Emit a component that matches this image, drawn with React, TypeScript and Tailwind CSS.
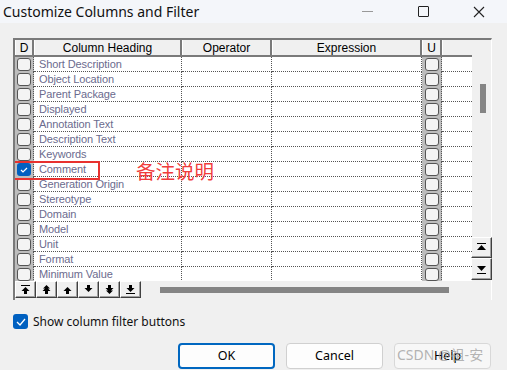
import React from 'react'

const rows = [
  'Short Description',
  'Object Location',
  'Parent Package',
  'Displayed',
  'Annotation Text',
  'Description Text',
  'Keywords',
  'Comment',
  'Generation Origin',
  'Stereotype',
  'Domain',
  'Model',
  'Unit',
  'Format',
  'Minimum Value',
]

function Box({ checked }: { checked?: boolean }) {
  if (checked) {
    return (
      <div className="w-[14px] h-[13px] rounded-[3px] bg-[#0060c0] flex items-center justify-center">
        <svg width="8" height="6" viewBox="0 0 8 6" fill="none">
          <path d="M1 3l2 2 4-4" stroke="#fff" strokeWidth="1.2" />
        </svg>
      </div>
    )
  }
  return <div className="w-[14px] h-[13px] rounded-[3px] border border-[#555] bg-[#f4f4f4]" />
}

// small arrow icons for the row move buttons
function MoveIcon({ kind }: { kind: number }) {
  const g = (() => {
    switch (kind) {
      case 0:
        return (
          <>
            <rect x="1" y="1" width="9" height="1" />
            <path d="M5.5 3L1.5 7h2.5v3h3V7h2.5z" />
          </>
        )
      case 1:
        return <path d="M5.5 1L2 4.5h2L1.5 7h2.5v3h3V7h2.5L7 4.5h2z" />
      case 2:
        return <path d="M5.5 3L1.5 7h2.5v3h3V7h2.5z" />
      case 3:
        return <path d="M4 1h3v3h2.5l-4 4-4-4H4z" />
      case 4:
        return <path d="M4 1h3v3h2.5L7 6.5h2L5.5 10 2 6.5h2L1.5 4H4z" />
      default:
        return (
          <>
            <path d="M4 1h3v3h2.5l-4 4-4-4H4z" />
            <rect x="1" y="9" width="9" height="1" />
          </>
        )
    }
  })()
  return (
    <svg width="11" height="11" viewBox="0 0 11 11" fill="#000">
      {g}
    </svg>
  )
}

function RaisedBtn({ children, className = '' }: { children: React.ReactNode; className?: string }) {
  return (
    <div
      className={`flex items-center justify-center bg-[#f0f0f0] border-t border-l border-t-white border-l-white border-r border-b border-r-[#404040] border-b-[#404040] shadow-[inset_-1px_-1px_0_#a0a0a0] ${className}`}
    >
      {children}
    </div>
  )
}

export default function App() {
  const dotH = 'border-b border-dotted border-b-[#555]'
  const dotV = 'border-r border-dotted border-r-[#555]'

  return (
    <div className="w-[507px] h-[370px] bg-[#f0f0f0] overflow-hidden text-black font-['Liberation_Sans',sans-serif]">
      {/* Title bar */}
      <div className="h-[23px] bg-[#f4f6fa] flex items-center">
        <span className="pl-[3px] text-[14px] leading-none font-['Noto_Sans',sans-serif] text-[#111]">
          Customize Columns and Filter
        </span>
        <div className="ml-auto flex items-center h-full">
          <div className="w-[56px] flex justify-center">
            <div className="w-[11px] h-px bg-[#999]" />
          </div>
          <div className="w-[56px] flex justify-center">
            <div className="w-[11px] h-[11px] border border-[#222] rounded-[1px]" />
          </div>
          <div className="w-[56px] flex justify-center">
            <svg width="12" height="12" viewBox="0 0 12 12">
              <path d="M1 1l10 10M11 1L1 11" stroke="#222" strokeWidth="1.1" />
            </svg>
          </div>
        </div>
      </div>

      {/* Grid frame */}
      <div className="ml-[13px] mt-[15px] w-[479px] h-[262px] border-t-2 border-l-2 border-t-[#7a7a7a] border-l-[#7a7a7a] border-r border-r-white flex flex-col">
        <div className="flex">
          <div className="w-[457px] flex flex-col bg-white">
            {/* Header */}
            <div className="flex h-[17px] bg-[#f0f0f0] border-b-2 border-b-[#7a7a7a] text-[12px] leading-none">
              {[
                ['D', 'w-[19px]'],
                ['Column Heading', 'w-[148px]'],
                ['Operator', 'w-[90px]'],
                ['Expression', 'w-[150px]'],
                ['U', 'w-[20px]'],
                ['', 'w-[30px]'],
              ].map(([t, w], i) => (
                <div
                  key={i}
                  className={`${w} shrink-0 flex items-center justify-center border-l border-l-white ${i < 5 ? 'border-r-2 border-r-[#7a7a7a]' : ''}`}
                >
                  {t}
                </div>
              ))}
            </div>
            {/* Rows */}
            <div className="h-[224px] overflow-hidden relative">
              {rows.map((r, i) => (
                <div key={r} className="flex h-[15px]">
                  <div className={`w-[19px] shrink-0 bg-[#bdbdbd] flex items-center justify-center ${dotV}`}>
                    <Box checked={r === 'Comment'} />
                  </div>
                  <div
                    className={`w-[148px] shrink-0 pl-[5px] flex items-center text-[11px] leading-none tracking-[-0.1px] text-[#6b6b8e] ${dotH} ${dotV}`}
                  >
                    {r}
                  </div>
                  <div className={`w-[90px] shrink-0 ${dotH} ${dotV}`} />
                  <div className={`w-[150px] shrink-0 ${dotH} ${dotV}`} />
                  <div className={`w-[20px] shrink-0 bg-[#bdbdbd] flex items-center justify-center ${dotV}`}>
                    <Box />
                  </div>
                  <div className={`w-[30px] shrink-0 ${i === 14 ? '' : dotH}`} />
                </div>
              ))}
              {/* annotation */}
              <div className="absolute left-[-2px] top-[104px] w-[87px] h-[19px] border-2 border-[#e8322f]" />
              <div className="absolute left-[121px] top-[103px] text-[19.5px] leading-[21px] text-[#f03c3c] font-['Noto_Sans_CJK_SC',sans-serif]">
                备注说明
              </div>
            </div>
          </div>
          {/* Vertical scrollbar */}
          <div className="w-[20px] h-[241px] flex flex-col items-center">
            <div className="mt-[44px] ml-[2px] w-[6px] h-[29px] bg-[#858585]" />
            <RaisedBtn className="mt-[124px] w-[21px] h-[21px] ml-[-1px]">
              <svg width="11" height="11" viewBox="0 0 11 11">
                <rect x="1" y="1" width="9" height="1" fill="#000" />
                <path d="M5.5 3L1 8h9z" fill="#000" />
              </svg>
            </RaisedBtn>
            <RaisedBtn className="w-[21px] h-[22px] ml-[-1px]">
              <svg width="11" height="11" viewBox="0 0 11 11">
                <path d="M1 2h9L5.5 7z" fill="#000" />
                <rect x="1" y="9" width="9" height="1" fill="#000" />
              </svg>
            </RaisedBtn>
          </div>
        </div>
        {/* Bottom button bar */}
        <div className="flex items-center h-[17px]">
          {[0, 1, 2, 3, 4, 5].map((k) => (
            <RaisedBtn key={k} className="w-[21px] h-[17px]">
              <MoveIcon kind={k} />
            </RaisedBtn>
          ))}
          <div className="ml-[19px] w-[289px] h-[6px] bg-[#858585]" />
        </div>
      </div>

      {/* Checkbox */}
      <div className="mt-[14px] ml-[13px] flex items-center gap-[5px] font-['Noto_Sans',sans-serif] text-[12px] leading-none text-[#111]">
        <div className="w-[15px] h-[15px] rounded-[3px] bg-[#0060c0] flex items-center justify-center">
          <svg width="10" height="8" viewBox="0 0 10 8" fill="none">
            <path d="M1 4l3 3 5-6" stroke="#fff" strokeWidth="1.3" />
          </svg>
        </div>
        <span>Show column filter buttons</span>
      </div>

      {/* Dialog buttons */}
      <div className="mt-[14px] ml-[178px] flex gap-[11px] font-['Noto_Sans',sans-serif] text-[12.5px]">
        <div className="w-[97px] h-[26px] rounded-[4px] border-2 border-[#0067c0] bg-[#fdfdfd] flex items-center justify-center">
          OK
        </div>
        <div className="w-[97px] h-[26px] rounded-[4px] border border-[#d0d0d0] bg-[#fdfdfd] flex items-center justify-center">
          Cancel
        </div>
        <div className="relative w-[97px] h-[26px] rounded-[4px] border border-[#d8d8d8] bg-[#f7f7f7] flex items-center justify-center">
          <span className="ml-[10px]">Help</span>
          <span className="absolute left-[2px] top-[4px] text-[14px] leading-none text-[#a0a0a0]/80 font-['Noto_Sans','Noto_Sans_CJK_SC',sans-serif]">
            CSDN @祖-安
          </span>
        </div>
      </div>
    </div>
  )
}
